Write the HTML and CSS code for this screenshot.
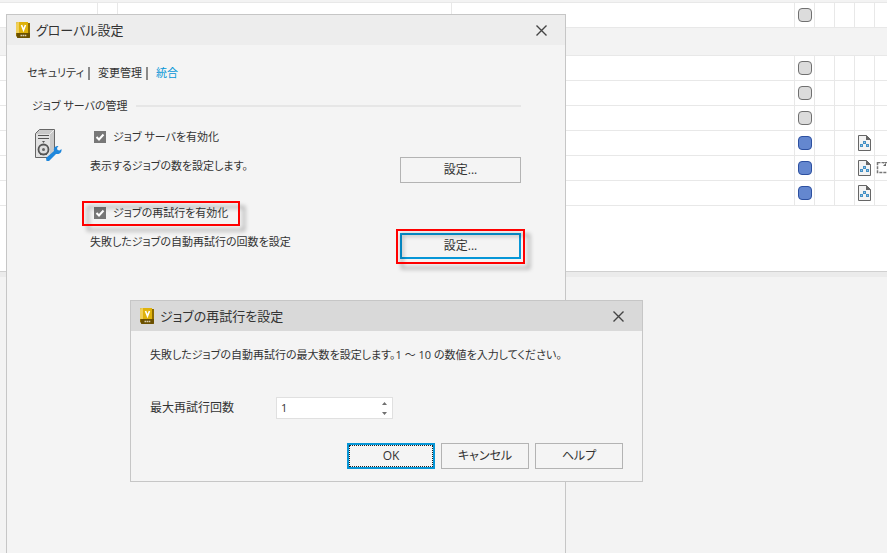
FILE: index.html
```
<!DOCTYPE html>
<html lang="ja">

<head>
  <meta charset="UTF-8">
  <meta name="viewport" content="width=device-width, initial-scale=1.0">
  <title>グローバル設定</title>
  <link rel="stylesheet" href="styles.css">
</head>

<body>
  <svg class="sprite" aria-hidden="true">
    <symbol id="page" viewBox="0 0 13 16">
      <path d="M.5.5h8l4 4v11H.5z" fill="#f3f3f3" stroke="#666" />
      <path d="M8 0l5 5H8z" fill="#666" />
      <path d="M5 6h3v3H5zM2 9h3v3H2zM8 9h3v3H8z" fill="#4590c4" />
      <path d="M6 7h1v1H6zM3 10h1v1H3zM9 10h1v1H9z" fill="#8fc4e8" />
    </symbol>
    <symbol id="close" viewBox="0 0 11 11">
      <path d="M.5.5l10 10M10.500.5l-10 10" fill="none" stroke="#444" stroke-width="1.4" />
    </symbol>
    <symbol id="vault" viewBox="0 0 14 16">
      <path d="M2 0h10v1h2v14q0 1-1 1H2q-1 0-1-1L0 14V2q0-2 2-2z" fill="#8f6c00" />
      <path d="M2 0h10v11H0V2q0-2 2-2z" fill="#dfb20b" />
      <path d="M2 0h1v11H0V2q0-2 2-2z" fill="#f0cf58" />
      <path d="M1 11h13v4q0 1-1 1H2q-1 0-1-1z" fill="#6b5000" />
      <path d="M5.500 3l2 5 2-5" fill="none" stroke="#fff" stroke-width="1.600" />
      <path d="M4.500 13.500h6" stroke="#d9cfb3" stroke-width="1.500" stroke-dasharray="1.600 .5" />
    </symbol>
  </svg>

  <main class="list">
    <table class="grid">
      <colgroup>
        <col class="col-first">
        <col class="col-icon">
        <col class="col-name">
        <col>
        <col class="col-icon">
        <col class="col-icon">
        <col class="col-icon">
        <col class="col-icon">
        <col class="col-last">
      </colgroup>
      <tbody>
        <tr><td></td><td></td><td></td><td></td><td><i class="state"></i></td><td></td><td></td><td></td><td></td></tr>
        <tr class="group"><td colspan="9"></td></tr>
        <tr><td></td><td></td><td></td><td></td><td><i class="state"></i></td><td></td><td></td><td></td><td></td></tr>
        <tr><td></td><td></td><td></td><td></td><td><i class="state"></i></td><td></td><td></td><td></td><td></td></tr>
        <tr><td></td><td></td><td></td><td></td><td><i class="state"></i></td><td></td><td></td><td></td><td></td></tr>
        <tr><td></td><td></td><td></td><td></td><td><i class="state blue"></i></td><td></td><td></td><td><svg class="page"><use href="#page" /></svg></td><td></td></tr>
        <tr><td></td><td></td><td></td><td></td><td><i class="state blue"></i></td><td></td><td></td><td><svg class="page"><use href="#page" /></svg></td>
          <td><svg class="part" viewBox="0 0 16 12"><path d="M1.500.5h6l1 1 1-1h5v10h-13z" fill="none" stroke="#777" stroke-dasharray="3 1" stroke-width="1.500" /><path d="M7 4l3-3v3z" fill="#666" /></svg></td></tr>
        <tr><td></td><td></td><td></td><td></td><td><i class="state blue"></i></td><td></td><td></td><td><svg class="page"><use href="#page" /></svg></td><td></td></tr>
      </tbody>
    </table>
  </main>

  <section class="window settings" role="dialog" aria-labelledby="settings-title">
    <header class="titlebar">
      <svg class="logo"><use href="#vault" /></svg>
      <h1 id="settings-title">グローバル設定</h1>
      <button class="close" aria-label="閉じる"><svg><use href="#close" /></svg></button>
    </header>
    <div class="settings-body">
      <nav class="tabs">
        <a href="#">セキュリティ</a>
        <a href="#">変更管理</a>
        <a href="#" class="active">統合</a>
      </nav>
      <h2 class="legend">ジョブ サーバの管理</h2>
      <div class="server">
        <svg class="server-icon" viewBox="0 0 27 32">
          <path d="M.5 4.500l4-4h15v24l-4 4H.5z" fill="#c9c9c9" stroke="#666" />
          <path d="M1 5h14v23H1z" fill="#e2e2e2" />
          <path d="M15 5l4-4" stroke="#eee" />
          <path d="M3 6.500h11M3 9.500h11" stroke="#555" />
          <path d="M7 12h3l-1.500 2z" fill="#555" />
          <circle cx="8.500" cy="20.500" r="5" fill="#ddd" stroke="#555" stroke-width="1.800" />
          <circle cx="8.500" cy="20.500" r="1.500" fill="#666" />
          <path d="M5 25.500h7" stroke="#555" />
          <path d="M11 29l8-7q-1-4 3-5l1.500 0-1.500 2 .5 2 2 .5 2-1.500q.5 4-3 5l-2.500 0-7 7h-2.500z" fill="#1f87dc" />
        </svg>
        <div class="options">
          <div class="option">
            <label class="check"><input type="checkbox" checked>ジョブ サーバを有効化</label>
            <p>表示するジョブの数を設定します。</p>
            <button class="btn">設定...</button>
          </div>
          <div class="option">
            <label class="check marked"><input type="checkbox" checked>ジョブの再試行を有効化</label>
            <p>失敗したジョブの自動再試行の回数を設定</p>
            <div class="marked marked-btn"><button class="btn primary">設定...</button></div>
          </div>
        </div>
      </div>
    </div>
  </section>

  <section class="window retry" role="dialog" aria-labelledby="retry-title">
    <header class="titlebar">
      <svg class="logo"><use href="#vault" /></svg>
      <h1 id="retry-title">ジョブの再試行を設定</h1>
      <button class="close" aria-label="閉じる"><svg><use href="#close" /></svg></button>
    </header>
    <form class="retry-body">
      <p>失敗したジョブの自動再試行の最大数を設定します。1 ～ 10 の数値を入力してください。</p>
      <div class="field">
        <label for="count">最大再試行回数</label>
        <div class="spinner">
          <input type="number" id="count" min="1" max="10" value="1">
          <svg viewBox="0 0 5 13"><path d="M0 3l2.500-3L5 3zM0 10l2.500 3L5 10z" fill="#707070" /></svg>
        </div>
      </div>
      <div class="actions">
        <button type="button" class="btn primary focused">OK</button>
        <button type="button" class="btn">キャンセル</button>
        <button type="button" class="btn">ヘルプ</button>
      </div>
    </form>
  </section>
</body>

</html>
```

FILE: styles.css
```
* {
  box-sizing: border-box;
}

body {
  margin: 0;
  min-height: 100vh;
  overflow: hidden;
  background: #f3f3f3;
  color: #333;
  font: 11px/18px "Open Sans", "Noto Sans CJK JP", sans-serif;
  font-feature-settings: "palt";
}

h1,
h2,
p {
  margin: 0;
  font-weight: normal;
}

button,
input {
  font: inherit;
  color: inherit;
  font-feature-settings: inherit;
}

svg {
  display: block;
}

.sprite {
  position: absolute;
  width: 0;
  height: 0;
}

/* file list */
.list {
  min-height: 277px;
  padding-top: 2px;
  background: #fff;
  border-bottom: 5px solid #ebebeb;
  box-shadow: inset 0 2px #f3f3f3, inset 0 -1px #d0d0d0;
}

.grid {
  width: 100%;
  table-layout: fixed;
  border-collapse: collapse;
  border-top: 1px solid #e8e8e8;
}

.grid td {
  height: 25px;
  padding: 0;
  border-right: 1px solid #e8e8e8;
  border-bottom: 1px solid #e8e8e8;
}

.grid td:last-child {
  border-right: 0;
}

.grid .group td {
  height: 28px;
  background: #f3f3f3;
}

.col-first {
  width: 97px;
}

.col-icon {
  width: 20px;
}

.col-name {
  width: 334px;
}

.col-last {
  width: 13px;
}

.state {
  display: block;
  width: 14px;
  height: 14px;
  margin-left: 3px;
  background: #dcdcdc;
  border: 1px solid #707070;
  border-radius: 4px;
}

.state.blue {
  background: #6487cf;
  border-color: #2d50a0;
}

.page {
  width: 13px;
  height: 16px;
  margin-left: 3px;
}

.part {
  width: 16px;
  height: 12px;
  margin-left: 1px;
}

/* windows */
.window {
  position: absolute;
  background: #f4f4f4;
  border: 1px solid #c6c6c6;
}

.settings {
  top: 14px;
  bottom: 0;
  left: 6px;
  width: 560px;
  border-bottom: 0;
}

.retry {
  top: 300px;
  left: 130px;
  width: 513px;
}

.titlebar {
  display: flex;
  align-items: center;
  height: 30px;
  padding: 0 18px 0 9px;
  background: #ededed;
}

.retry .titlebar {
  background: #d9d9d9;
}

.titlebar h1 {
  flex: 1;
  margin-left: 6px;
  font-size: 13px;
}

.logo {
  width: 14px;
  height: 16px;
}

.close {
  padding: 0;
  background: none;
  border: 0;
}

.close svg {
  width: 11px;
  height: 11px;
}

.settings-body {
  padding: 19px 44px 0 20px;
}

.tabs {
  display: flex;
}

.tabs a {
  color: inherit;
  text-decoration: none;
}

.tabs a + a {
  display: flex;
  align-items: center;
}

.tabs a + a::before {
  content: "";
  width: 2px;
  height: 13px;
  margin: 0 8px 0 4px;
  background: #8a8a8a;
}

.tabs .active {
  color: #0696d7;
}

.legend {
  display: flex;
  align-items: center;
  margin: 15px 0 0 5px;
  font-size: 11px;
}

.legend::after {
  content: "";
  flex: 1;
  height: 2px;
  margin-left: 8px;
  background: #e6e6e6;
}

.server {
  display: flex;
  margin-top: 12px;
  padding-left: 8px;
}

.server-icon {
  width: 27px;
  height: 32px;
  margin-top: 2px;
}

.options {
  flex: 1;
  display: grid;
  gap: 20px;
  margin-left: 28px;
}

.option {
  display: grid;
  grid-template-columns: 1fr 121px;
  grid-template-rows: 20px 26px;
  row-gap: 10px;
}

.check {
  grid-column: 1 / 3;
  justify-self: start;
  display: flex;
  align-items: center;
  padding: 0 8px 0 4px;
}

.check input {
  appearance: none;
  width: 12px;
  height: 12px;
  margin: 0 7px 0 0;
  background: #777 url("data:image/svg+xml,%3Csvg xmlns='http://www.w3.org/2000/svg' viewBox='0 0 12 12'%3E%3Cpath d='M2.500 6l2.500 2.500 4.500-5' fill='none' stroke='white' stroke-width='2'/%3E%3C/svg%3E");
}

.btn {
  width: 100%;
  height: 26px;
  padding: 0;
  background: #f4f4f4;
  border: 1px solid #b3b3b3;
  font-size: 12px;
}

.btn.primary {
  border: 2px solid #0696d7;
}

.btn.focused {
  outline: 1px dotted #222;
  outline-offset: -3px;
}

/* red highlight frames */
.marked {
  position: relative;
}

.marked::after {
  content: "";
  position: absolute;
  inset: -2px -4px -3px -8px;
  border: 2px solid #f00;
  filter: drop-shadow(5px 5px 2px rgba(0, 0, 0, .35));
  pointer-events: none;
}

.marked-btn::after {
  inset: -4px -4px -5px;
}

/* retry dialog */
.retry-body {
  padding: 15px 19px 12px;
}

.field {
  display: flex;
  align-items: center;
  margin-top: 33px;
}

.field label {
  width: 126px;
  font-size: 12px;
}

.spinner {
  display: flex;
  align-items: center;
  width: 117px;
  height: 22px;
  padding: 0 5px 0 4px;
  background: #fff;
  border: 1px solid #e0e0e0;
}

.spinner input {
  appearance: textfield;
  flex: 1;
  min-width: 0;
  padding: 0;
  background: none;
  border: 0;
  outline: 0;
}

.spinner input::-webkit-inner-spin-button {
  appearance: none;
}

.spinner svg {
  width: 5px;
  height: 13px;
}

.actions {
  display: flex;
  justify-content: flex-end;
  gap: 6px;
  margin-top: 24px;
}

.actions .btn {
  width: 88px;
}
```
